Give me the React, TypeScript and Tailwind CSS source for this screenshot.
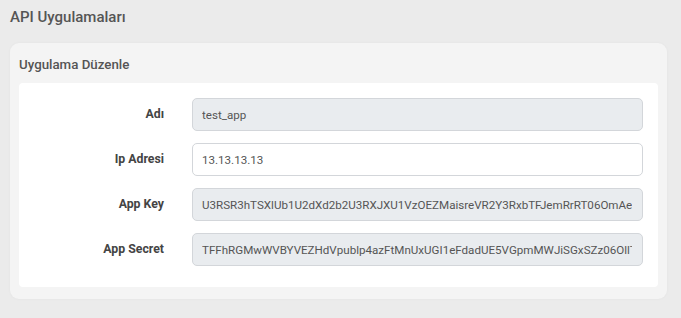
const rows = [
  { label: "Adı", value: "test_app", readOnly: true },
  { label: "Ip Adresi", value: "13.13.13.13", readOnly: false },
  { label: "App Key", value: "U3RSR3hTSXlUb1U2dXd2b2U3RXJXU1VzOEZMaisreVR2Y3RxbTFJemRrRT06OmAeWxQ2", readOnly: true },
  { label: "App Secret", value: "TFFhRGMwWVBYVEZHdVpublp4azFtMnUxUGI1eFdadUE5VGpmMWJiSGxSZz06OllTfQ8", readOnly: true },
];

export default function App() {
  return (
    <div className="min-h-[318px] w-full bg-[#ebebeb] px-[10px] pt-[5px] pb-[19px] font-['Roboto',sans-serif]">
      <h1 className="text-[15px] leading-[24px] font-medium text-[#555] mb-[14px]">API Uygulamaları</h1>

      <div className="w-[657px] rounded-[9px] bg-[#f4f4f4] px-[9px] pb-[12px] shadow-[0_0_3px_rgba(0,0,0,0.04)]">
        <div className="h-[40px] flex items-center text-[13.3px] font-medium text-[#555] pt-[3px]">Uygulama Düzenle</div>

        <div className="rounded-[4px] bg-white pt-[15px] pb-[21px] pr-[15px] flex flex-col gap-[12px]">
          {rows.map((r) => (
            <div key={r.label} className="flex items-center">
              <label className="w-[145px] shrink-0 text-right text-[12.3px] font-bold text-[#444]">{r.label}</label>
              <input
                value={r.value}
                readOnly
                className={`ml-[28px] flex-1 min-w-0 h-[33px] rounded-[5px] border border-[#d3d6da] pl-[9px] pr-[10px] text-[11.6px] text-[#555] outline-none ${r.readOnly ? "bg-[#e9ecef]" : "bg-white"}`}
              />
            </div>
          ))}
        </div>
      </div>
    </div>
  );
}
